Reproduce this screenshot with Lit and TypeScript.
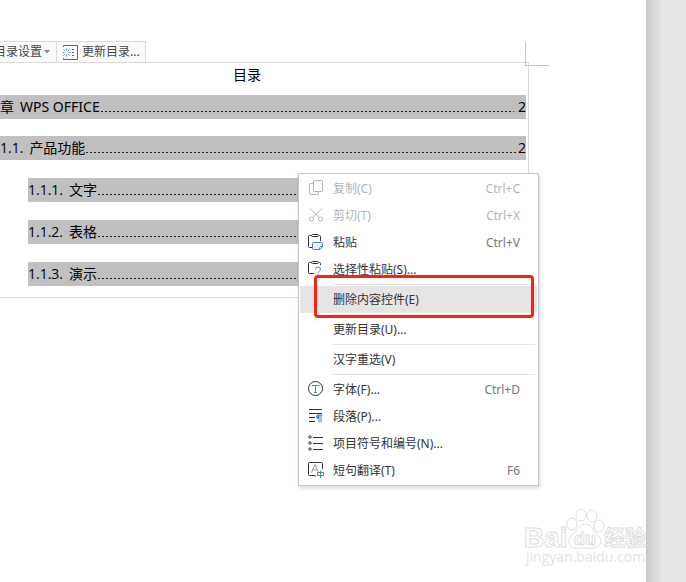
import { LitElement, html, svg, css, nothing } from "lit";
import { customElement } from "lit/decorators.js";
import { classMap } from "lit/directives/class-map.js";

interface TocEntry {
  level: number;
  num: string;
  title: string;
  page: string;
}

interface MenuEntry {
  label: string;
  icon?: string;
  keys?: string;
  disabled?: boolean;
  active?: boolean;
  ruled?: boolean;
}

const TOC: TocEntry[] = [
  { level: 1, num: "章", title: "WPS OFFICE", page: "2" },
  { level: 2, num: "1.1.", title: "产品功能", page: "2" },
  { level: 3, num: "1.1.1.", title: "文字", page: "" },
  { level: 3, num: "1.1.2.", title: "表格", page: "" },
  { level: 3, num: "1.1.3.", title: "演示", page: "" },
];

const MENU: MenuEntry[] = [
  { label: "复制(C)", icon: "copy", keys: "Ctrl+C", disabled: true },
  { label: "剪切(T)", icon: "cut", keys: "Ctrl+X", disabled: true },
  { label: "粘贴", icon: "paste", keys: "Ctrl+V" },
  { label: "选择性粘贴(S)...", icon: "pasteSpecial" },
  { label: "删除内容控件(E)", active: true, ruled: true },
  { label: "更新目录(U)...", ruled: true },
  { label: "汉字重选(V)", ruled: true },
  { label: "字体(F)...", icon: "font", keys: "Ctrl+D", ruled: true },
  { label: "段落(P)...", icon: "paragraph" },
  { label: "项目符号和编号(N)...", icon: "bullets" },
  { label: "短句翻译(T)", icon: "translate", keys: "F6" },
];

const ICONS: Record<string, unknown> = {
  copy: svg`<rect x="5.5" y="0.5" width="9" height="11" rx="1"/><path d="M5 3.5H2.5Q1.5 3.5 1.5 4.5V13.5Q1.5 14.5 2.5 14.5H9.5Q10.5 14.5 10.5 13.5V12"/>`,
  cut: svg`<path d="M2 1.5L11 10.5M14 1.5L5 10.5"/><circle cx="3.5" cy="12" r="2"/><circle cx="12.5" cy="12" r="2"/>`,
  paste: svg`<path d="M3 1.5H1.5Q.5 1.5 .5 2.5V12.5Q.5 13.5 1.5 13.5H4M11 1.5H11.5Q12.5 1.5 12.5 2.5V7"/><rect x="3.5" y="0.5" width="7" height="2" rx="1"/><path class="blue tint" d="M5.5 8.5H13.5Q14.5 8.5 14.5 9.5V13L12 15.5H5.5Q4.5 15.5 4.5 14.5V9.5Q4.5 8.5 5.5 8.5Z"/><path class="blue" d="M14.5 12.5H12.5Q11.5 12.5 11.5 15.5"/>`,
  pasteSpecial: svg`<path d="M3 1.5H1.5Q.5 1.5 .5 2.5V11.5Q.5 12.5 1.5 12.5H6M11 1.5H11.5Q12.5 1.5 12.5 2.5V4"/><rect x="3.5" y="0.5" width="7" height="2" rx="1"/><path class="blue" d="M7.5 8.5Q7.5 6 10 6T12.5 8.3Q12.5 9.5 11 10.3Q10 10.8 10 12M10 13.2V14.5"/>`,
  font: svg`<circle cx="7.5" cy="7.5" r="7"/><path class="blue" d="M4 5.5V4.5H11V5.5M7.5 4.5V11.5M6 11.5H9"/>`,
  paragraph: svg`<path d="M1 1.5H14M1 5.5H14M1 9.5H7M1 13.5H7"/><path class="blue solid" d="M14.5 6.5V7.5H13.5V14.5H12.5V7.5H11.5V14.5H10.5V11Q8 11 8 8.7Q8 6.5 10.5 6.5Z"/>`,
  bullets: svg`<circle cx="2" cy="2" r="1.2"/><circle cx="2" cy="8" r="1.2"/><circle cx="2" cy="14" r="1.2"/><path d="M5 2.5H15M5 8.5H15M5 14.5H15"/>`,
  translate: svg`<path d="M14.5 7V1.5Q14.5 .5 13.5 .5H1.5Q.5 .5 .5 1.5V12.5Q.5 13.5 1.5 13.5H5L8 14"/><path class="grey" d="M3.5 10.5L7 2.5L10.5 10.5M4.8 7.8H9.2"/><path class="blue" d="M9.5 10.5H15.5V13.5H9.5ZM12.5 8.5V16"/>`,
};

@customElement("toc-bar")
class TocBar extends LitElement {
  static styles = css`
    :host {
      display: flex;
      align-self: flex-start;
      height: 21px;
      box-sizing: border-box;
      margin-left: -6px;
      border-top: 1px solid #dadada;
      border-right: 1px solid #dadada;
      background: #fafafa;
    }
    .tool {
      display: flex;
      align-items: center;
      gap: 4px;
      padding: 0 5px;
      border: 0;
      background: none;
      color: #444;
      font: 12px/20px "Noto Sans", "Noto Sans CJK SC", sans-serif;
      white-space: nowrap;
    }
    .setup {
      gap: 2px;
      padding: 0 6px 0 0;
      border-right: 1px solid #dadada;
    }
    .caret {
      width: 6px;
      height: 4px;
      fill: #888;
    }
    .glyph {
      width: 16px;
      height: 16px;
      fill: none;
      stroke: #666;
    }
    .spark {
      stroke: #5b8def;
    }
  `;
  render() {
    return html`
      <button class="tool setup">
        目录设置<svg class="caret" viewBox="0 0 6 4"><path d="M0 0H6L3 3.5Z" /></svg>
      </button>
      <button class="tool">
        <svg class="glyph" viewBox="0 0 16 16">
          <path d="M1.5 3V1.5H15.5V15.5H1.5V14M10 5.5H12M10 8.5H12M10 11.5H12" />
          <path class="spark" d="M4.5 4.500V6.500M4.5 10.5V12.5M.5 8.5H2.5M6.5 8.5H8.500M1.500 5.500L3 7M6 10L7.500 11.500M7.500 5.500L6 7M3 10L1.500 11.500" />
        </svg>
        更新目录...
      </button>
    `;
  }
}

@customElement("toc-block")
class TocBlock extends LitElement {
  static styles = css`
    :host {
      display: block;
      position: relative;
      margin-right: 117px;
      padding: 0 2px 11px 0;
      border: 1px solid #dadada;
      border-left: 0;
      color: #000;
      font: 14px/24px "Open Sans", "Noto Sans CJK SC", sans-serif;
    }
    .heading {
      margin: 0 0 8px;
      padding-right: 32px;
      font: inherit;
      text-align: center;
    }
    .entries {
      display: flex;
      flex-direction: column;
      gap: 18px;
    }
    .entry {
      display: flex;
      height: 24px;
      background: #c0c0c0;
      color: inherit;
      text-decoration: none;
      white-space: nowrap;
    }
    .num {
      margin-right: 6px;
    }
    .level1 {
      font-family: "Noto Sans", "Noto Sans CJK SC", sans-serif;
    }
    .level2 {
      margin-top: -1px;
    }
    .level3 {
      margin-left: 28px;
    }
    .leader {
      flex: 1;
      align-self: flex-start;
      height: 1px;
      margin: 16px 1px 0;
      background: repeating-linear-gradient(90deg, #222 0 2px, transparent 2px 4px);
    }
    .level1 .leader {
      margin-right: 4px;
    }
    .margin-mark {
      position: absolute;
      top: -21px;
      right: -21px;
      width: 23px;
      height: 23px;
      border-left: 1px solid #c4c4c4;
      border-bottom: 1px solid #c4c4c4;
    }
  `;
  render() {
    return html`
      <h1 class="heading">目录</h1>
      <nav class="entries">
        ${TOC.map(
          (e) => html`<a class="entry level${e.level}" href="#${e.num}"
            ><span class="num">${e.num}</span><span>${e.title}</span><span class="leader"></span
            ><span>${e.page}</span></a
          >`
        )}
      </nav>
      <span class="margin-mark"></span>
    `;
  }
}

@customElement("context-menu")
class ContextMenu extends LitElement {
  static styles = css`
    :host {
      display: block;
      box-sizing: border-box;
      width: 241px;
      padding: 1px;
      border: 1px solid #c6c6c6;
      background: #fff;
      box-shadow: 1px 2px 4px rgba(0, 0, 0, 0.16);
    }
    .item {
      position: relative;
      display: grid;
      grid-template-columns: 17px 1fr auto;
      align-items: center;
      column-gap: 8px;
      width: 100%;
      height: 27px;
      padding: 0 17px 0 8px;
      border: 0;
      background: none;
      color: #333;
      font: 12px/18px "Noto Sans", "Noto Sans CJK SC", sans-serif;
      text-align: left;
      white-space: nowrap;
    }
    .item:disabled {
      color: #b4b4b4;
    }
    .active {
      background: #e5e5e5;
    }
    .keys {
      color: #777;
    }
    .item:disabled .keys {
      color: inherit;
    }
    .rule {
      height: 1px;
      margin: 1px 2px 1px 33px;
      border: 0;
      background: #e4e4e4;
    }
    .callout {
      position: absolute;
      inset: -11px 3px -5px 14px;
      border: 3px solid #ff2012;
      border-radius: 4px;
      z-index: 1;
    }
    .icon {
      width: 17px;
      height: 17px;
      fill: none;
      stroke: currentColor;
    }
    .blue {
      stroke: #4a80d4;
    }
    .tint {
      fill: #e8f1fc;
    }
    .solid {
      fill: #4a80d4;
      stroke: none;
    }
    .grey {
      stroke: #999;
    }
  `;
  render() {
    return MENU.map(
      (m) => html`
        ${m.ruled ? html`<hr class="rule" />` : nothing}
        <button class=${classMap({ item: true, active: !!m.active })} ?disabled=${!!m.disabled}>
          <svg class="icon" viewBox="0 0 17 17">${m.icon ? ICONS[m.icon] : nothing}</svg>
          <span>${m.label}</span>
          <span class="keys">${m.keys ?? ""}</span>
          ${m.active ? html`<span class="callout"></span>` : nothing}
        </button>
      `
    );
  }
}

@customElement("site-mark")
class SiteMark extends LitElement {
  static styles = css`
    :host {
      display: block;
    }
    .mark {
      display: block;
      width: 124px;
      height: 62px;
      overflow: visible;
      fill: #fff;
      stroke: #dedede;
    }
    .name {
      font: bold 28px "Liberation Sans", sans-serif;
    }
    .inner {
      font: bold 18px "Liberation Sans", sans-serif;
    }
    .han {
      font: bold 21px "Noto Sans CJK SC", sans-serif;
    }
    .site {
      font: 14px "Open Sans", sans-serif;
      fill: #e4e4e4;
      stroke: none;
    }
  `;
  render() {
    return html`
      <svg class="mark" viewBox="0 0 124 62">
        <text class="name" x="0" y="40">Bai</text>
        <ellipse cx="48" cy="17" rx="5" ry="6" />
        <ellipse cx="57" cy="8" rx="5" ry="6" />
        <ellipse cx="68" cy="9" rx="5" ry="6" />
        <ellipse cx="75" cy="19" rx="5" ry="6" />
        <path d="M61 17C67 17 69 23 74 28C80 34 76 41 69 41H52C45 41 42 33 48 28C54 23 55 17 61 17Z" />
        <text class="inner" x="50" y="38">du</text>
        <text class="han" x="80" y="38">经验</text>
        <text class="site" x="2" y="55">jingyan.baidu.com</text>
      </svg>
    `;
  }
}

@customElement("app-root")
class AppRoot extends LitElement {
  static styles = css`
    :host {
      display: flex;
      min-height: 100vh;
      background: #e6e6e6;
    }
    .sheet {
      position: relative;
      flex: 1;
      display: flex;
      flex-direction: column;
      box-sizing: border-box;
      min-width: 0;
      padding-top: 41px;
      overflow: hidden;
      background: #fff;
    }
    .desk {
      width: 40px;
      background: linear-gradient(90deg, #c8c8c8, #e6e6e6 16px);
    }
    .menu {
      position: absolute;
      top: 173px;
      left: 298px;
    }
    .watermark {
      position: absolute;
      right: -2px;
      bottom: 13px;
    }
  `;
  render() {
    return html`
      <main class="sheet">
        <toc-bar></toc-bar>
        <toc-block></toc-block>
        <context-menu class="menu"></context-menu>
        <site-mark class="watermark"></site-mark>
      </main>
      <div class="desk"></div>
    `;
  }
}
